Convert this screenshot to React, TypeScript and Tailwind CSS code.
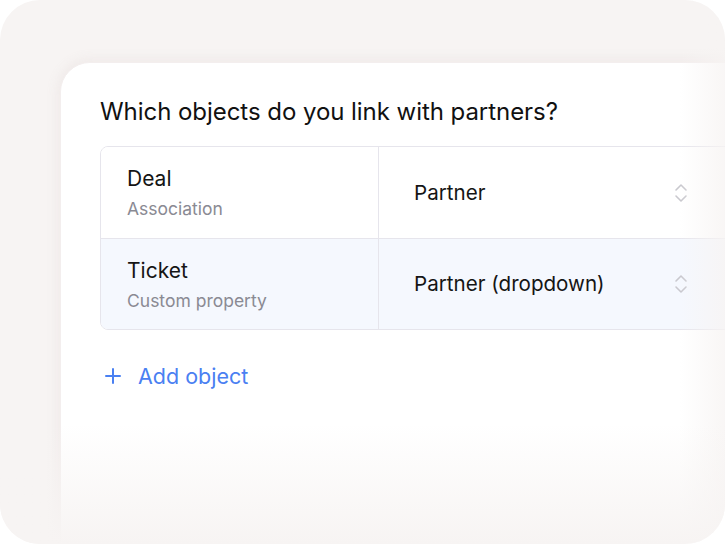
import { Plus } from 'lucide-react'

const ROWS = [
  { name: 'Deal', kind: 'Association', target: 'Partner', tinted: false },
  { name: 'Ticket', kind: 'Custom property', target: 'Partner (dropdown)', tinted: true },
]

function UpDown() {
  return (
    <svg width="16" height="22" viewBox="0 0 16 22" fill="none" stroke="#c9c8ce" strokeWidth="1.6" strokeLinecap="round" strokeLinejoin="round">
      <path d="M3 8l5-5 5 5" />
      <path d="M3 14l5 5 5-5" />
    </svg>
  )
}

export default function App() {
  return (
    <div className="h-[544px] w-[726px] bg-white font-['Inter',sans-serif]">
      <div className="relative h-[544px] w-[725px] overflow-hidden rounded-[40px] bg-[#f7f4f3] pl-[60px] pt-[62px]">
        {/* card */}
        <div className="h-[520px] w-[700px] rounded-tl-[30px] border border-[#f3eeee] bg-white pl-[39px] pt-[33px] shadow-[0_0_10px_4px_rgba(240,234,233,0.9)]">
          <h2 className="text-[24px] leading-[32px] tracking-[-0.05px] text-[#111]">
            Which objects do you link with partners?
          </h2>

          {/* mapping table */}
          <div className="mt-[18px] w-[640px] overflow-hidden rounded-[8px] border border-[#e6e5ec]">
            {ROWS.map((row, i) => (
              <div
                key={row.name}
                className={`flex h-[91px] ${i > 0 ? 'border-t border-[#e6e5ec]' : ''} ${
                  row.tinted ? 'bg-[#f5f8fe]' : 'bg-white'
                }`}
              >
                <div className="flex w-[278px] flex-col justify-center border-r border-[#e6e5ec] pl-[26px]">
                  <span className="text-[21px] leading-[28px] text-[#151515]">{row.name}</span>
                  <span className="mt-[5px] text-[17.5px] leading-[22px] text-[#8a8a93]">{row.kind}</span>
                </div>
                <div className="flex flex-1 items-center pl-[35px]">
                  <span className="w-[259px] text-[20.6px] leading-[28px] text-[#151515]">{row.target}</span>
                  <UpDown />
                </div>
              </div>
            ))}
          </div>

          <button className="mt-[32px] flex items-center text-[#4a80f2]">
            <Plus size={24} strokeWidth={2} className="ml-[1px]" />
            <span className="ml-[13px] text-[21.5px] leading-[28px]">Add object</span>
          </button>
        </div>

        {/* soft fade on right and bottom edges */}
        <div className="pointer-events-none absolute inset-y-0 right-0 w-[45px] bg-gradient-to-r from-transparent to-[#f7f4f3]/80" />
        <div className="pointer-events-none absolute inset-x-0 bottom-0 h-[120px] bg-gradient-to-b from-transparent to-[#f7f4f3]" />
      </div>
    </div>
  )
}
